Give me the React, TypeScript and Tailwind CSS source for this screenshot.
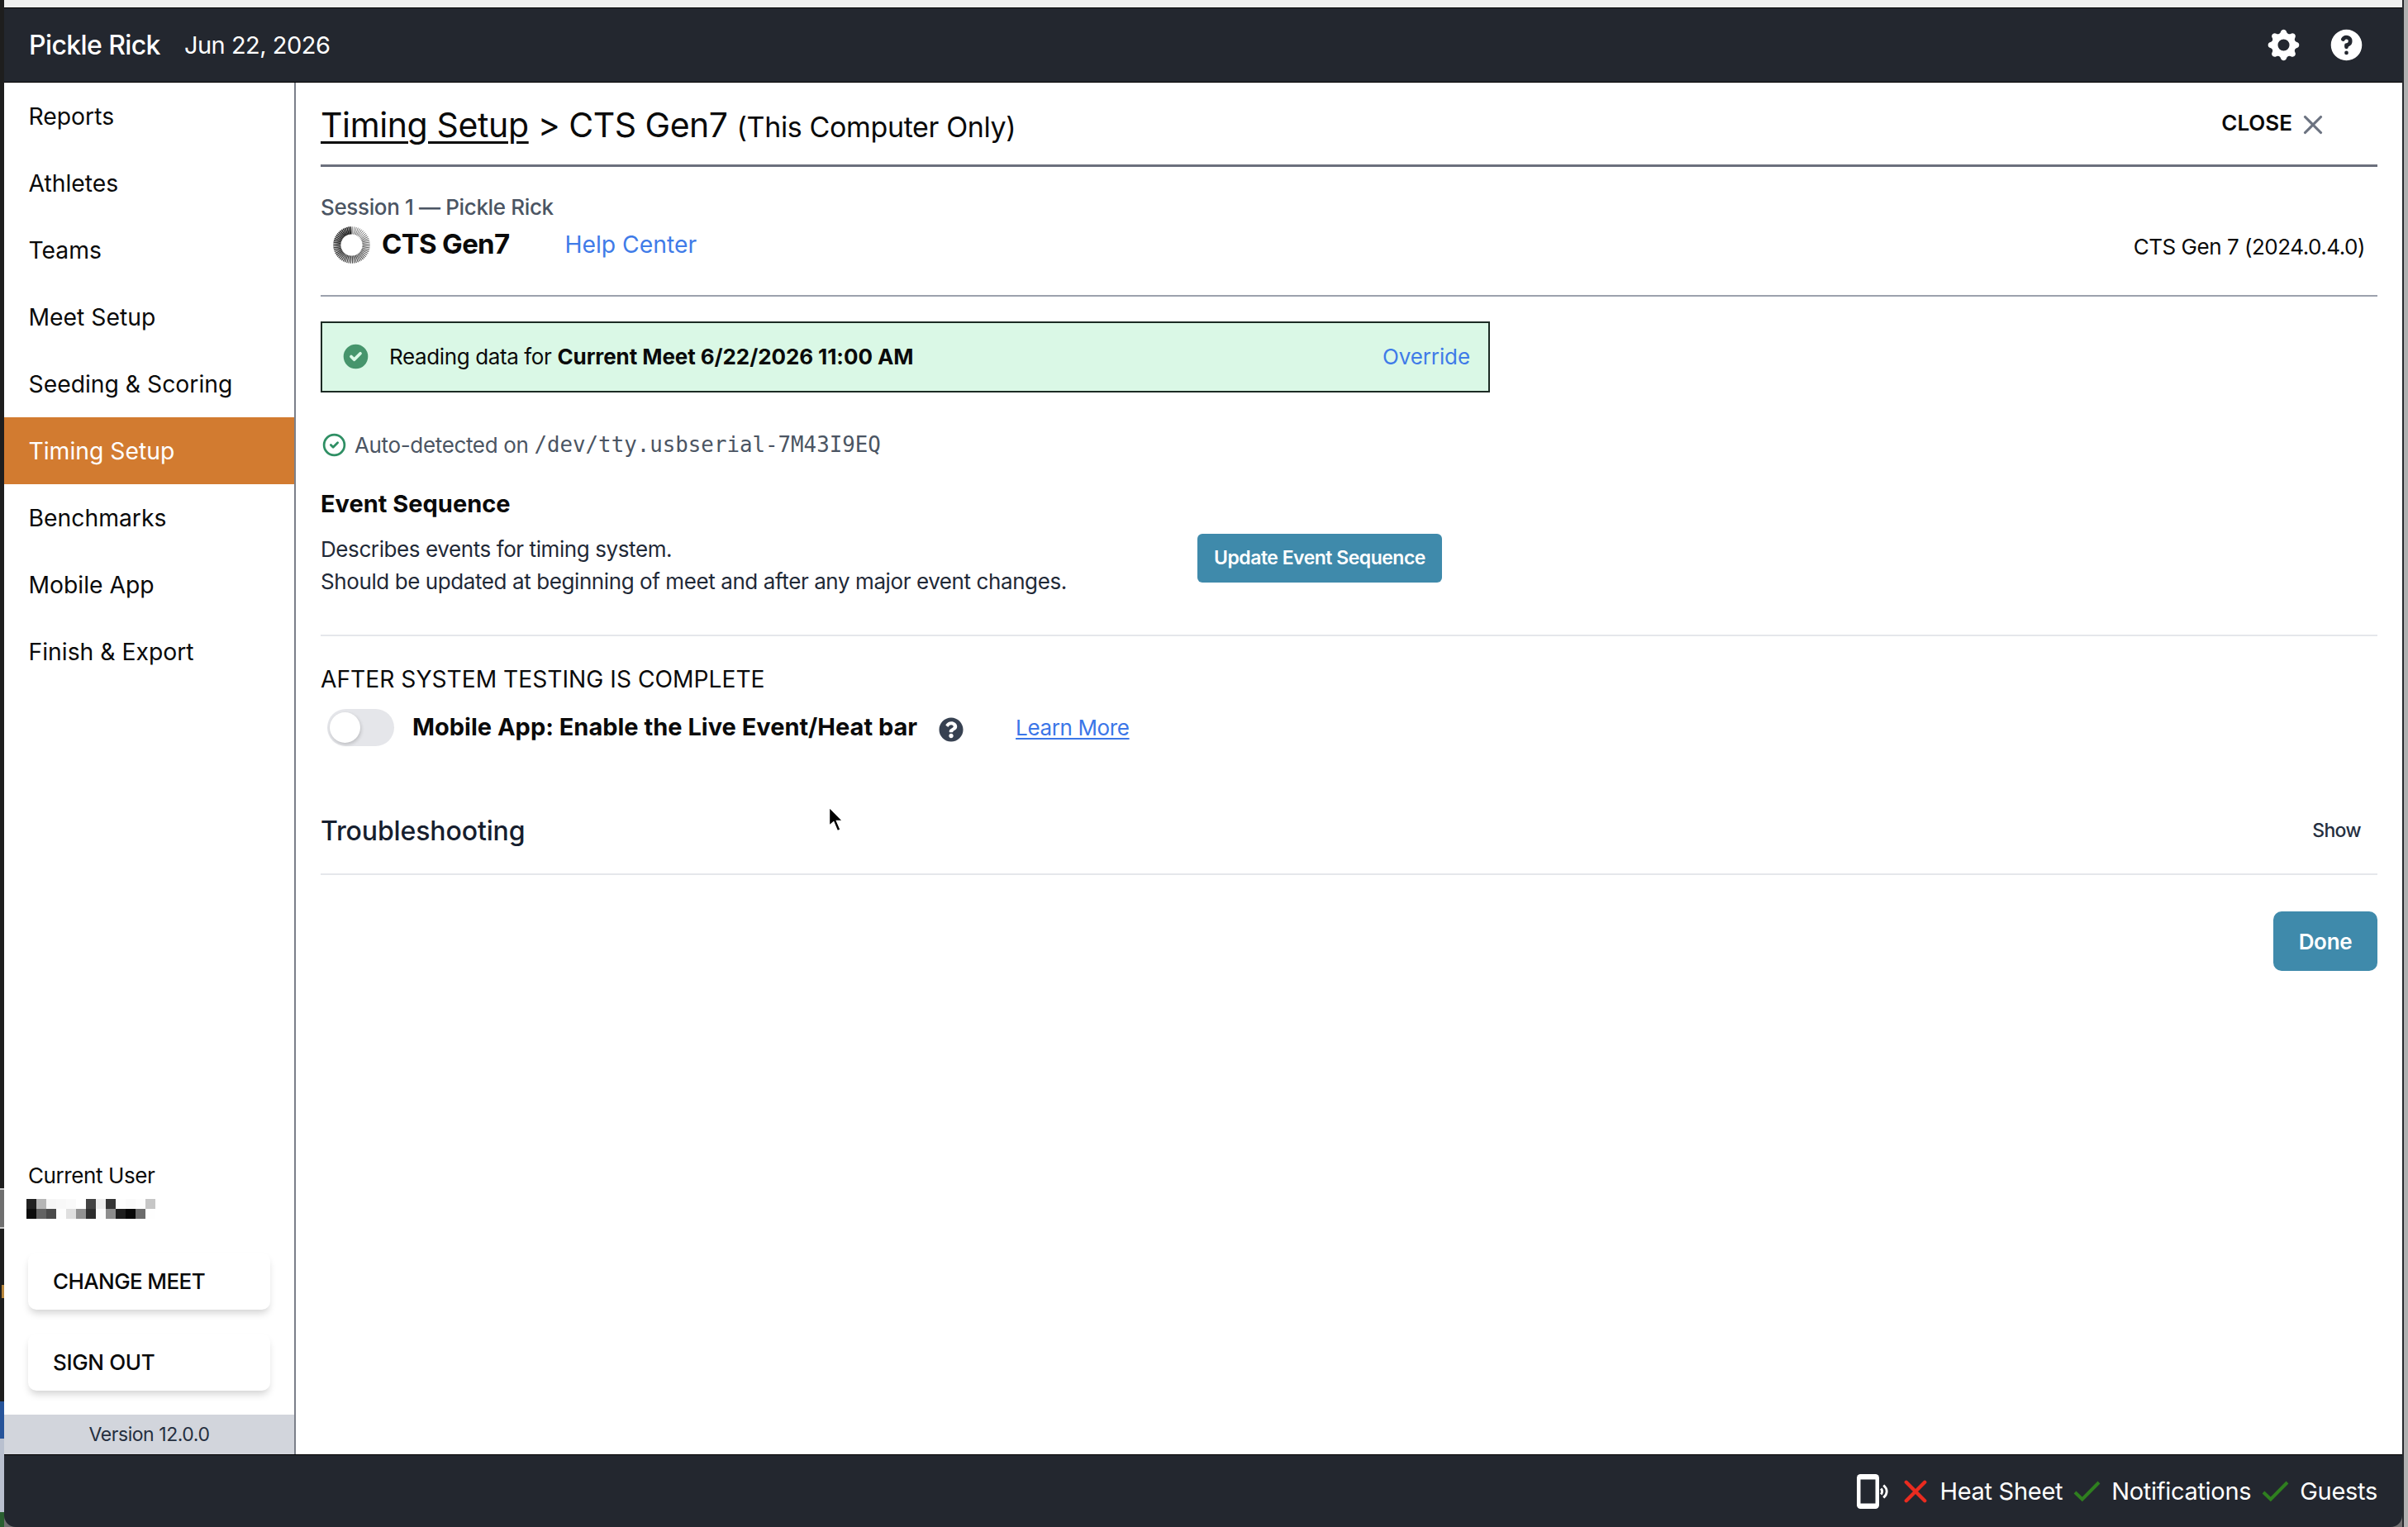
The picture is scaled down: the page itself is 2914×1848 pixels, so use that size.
import React from 'react';
import { HiCog, HiQuestionMarkCircle, HiOutlineX, HiCheckCircle, HiOutlineCheckCircle } from 'react-icons/hi';
import { FaQuestionCircle } from 'react-icons/fa';

const navItems = [
  'Reports',
  'Athletes',
  'Teams',
  'Meet Setup',
  'Seeding & Scoring',
  'Timing Setup',
  'Benchmarks',
  'Mobile App',
  'Finish & Export',
];

// Redacted user name, one grey level per block
const redacted = [
  ['#212121', '#b5b5b5', '#f6f6f6', '#f8f8f8', '#fafafa', '#ffffff', '#434343', '#eeeeee', '#353535', '#fdfdfd', '#fafafa', '#fdfdfd', '#c6c6c6'],
  ['#0c0c0c', '#636363', '#4a4a4a', '#fdfdfd', '#dfdfdf', '#919191', '#2d2d2d', '#fdfdfd', '#8d8d8d', '#1e1e1e', '#070707', '#6b6b6b', '#fefefe'],
];

const SpokeRing: React.FC = () => {
  const spokes = Array.from({ length: 60 }, (_, i) => i);
  return (
    <svg viewBox="0 0 44 44" className="h-[45px] w-[45px]">
      {spokes.map((i) => (
        <line
          key={i}
          x1="22"
          y1="0.2"
          x2="22"
          y2="9.2"
          stroke="#111"
          strokeWidth={0.7 + (i / 60) * 0.85}
          strokeOpacity={0.65 + (i / 60) * 0.3}
          transform={`rotate(${i * 6 + 3} 22 22)`}
        />
      ))}
    </svg>
  );
};

const PhoneSignal: React.FC = () => (
  <svg viewBox="0 0 40 42" className="h-[42px] w-10" fill="none">
    <rect width="27" height="42" rx="4.5" fill="#fff" />
    <rect x="4.5" y="6.5" width="18" height="29" fill="#23272f" />
    <path d="M29.3 17.5c1.5 2 1.5 5 0 7" stroke="#fff" strokeWidth="3" />
    <path d="M32.3 13.5c5.2 4.5 5.2 10.5 0 15" stroke="#fff" strokeWidth="2.8" />
  </svg>
);

const Check: React.FC = () => (
  <svg viewBox="0 0 33 26" className="h-[26px] w-[33px]" fill="none">
    <path d="M2 14 10.8 22.5 31 2" stroke="#2f7f1f" strokeWidth="4" />
  </svg>
);

const Cross: React.FC = () => (
  <svg viewBox="0 0 28 28" className="h-7 w-7" fill="none">
    <path d="M2.8 2.8 25.2 25.2M25.2 2.8 2.8 25.2" stroke="#ea2b1f" strokeWidth="4.4" strokeLinecap="round" />
  </svg>
);

const Sidebar: React.FC = () => (
  <aside className="flex w-[353px] shrink-0 flex-col border-r-2 border-[#7b7f89]">
    <nav className="flex flex-col">
      {navItems.map((item) => (
        <a
          key={item}
          className={
            item === 'Timing Setup'
              ? 'flex h-[81px] items-center bg-[#d27b30] pl-[29.5px] pt-0.5 text-[28.3px] text-white'
              : 'flex h-[81px] items-center pl-[29.5px] pt-0.5 text-[28.3px]'
          }
        >
          {item}
        </a>
      ))}
    </nav>
    <div className="mt-auto flex flex-col px-[29px]">
      <span className="text-[26px] leading-[38px] tracking-[-0.4px]">Current User</span>
      <div className="-ml-0.5 mt-[9px] flex flex-col">
        {redacted.map((row, r) => (
          <div key={r} className="flex">
            {row.map((color, c) => (
              <span key={c} className="h-3 w-3" style={{ backgroundColor: color }} />
            ))}
          </div>
        ))}
      </div>
      <button className="mt-[41px] h-[69px] rounded-[10px] bg-white pl-[30px] text-left text-[26px] font-medium tracking-[-0.6px] shadow-[0_6px_10px_-2px_rgba(0,0,0,0.18)]">
        CHANGE MEET
      </button>
      <button className="mt-[29px] h-[69px] rounded-[10px] bg-white pl-[30px] text-left text-[26px] font-medium tracking-[-0.35px] shadow-[0_6px_10px_-2px_rgba(0,0,0,0.18)]">
        SIGN OUT
      </button>
    </div>
    <div className="mt-[29px] flex h-12 items-center justify-center bg-[#d2d5dc] text-[23px] tracking-[-0.45px] text-[#252f3f]">
      Version 12.0.0
    </div>
  </aside>
);

const Main: React.FC = () => (
  <main className="flex grow flex-col pl-[30px] pr-[30px]">
    <div className="flex h-[102px] items-center justify-between border-b-[3px] border-[#6b6f7c] pt-[5px]">
      <h1 className="text-[41px] tracking-[-0.37px]">
        <span className="underline decoration-[3px] underline-offset-[5px]">Timing Setup</span>
        <span className="tracking-[-0.5px]"> &gt; CTS Gen7 </span>
        <span className="text-[34px]">(This Computer Only)</span>
      </h1>
      <button className="mr-[59px] flex items-center gap-[6px] pb-[7px] text-[26px] font-semibold">
        CLOSE
        <HiOutlineX className="mt-1 h-[38px] w-[38px] text-[#6b7280]" />
      </button>
    </div>

    <div className="flex h-[157px] flex-col border-b-2 border-[#9ca1ad] pt-[30px]">
      <span className="text-[26px] font-medium leading-[38px] tracking-[-0.36px] text-[#4b5563]">
        Session 1 — Pickle Rick
      </span>
      <div className="flex h-[52px] items-center">
        <span className="ml-[15px]">
          <SpokeRing />
        </span>
        <span className="ml-[14px] text-[33px] font-bold tracking-[-0.7px]">CTS Gen7</span>
        <a className="ml-[67px] text-[28.3px] text-[#3f7be8]">Help Center</a>
        <span className="ml-auto mr-[15px] mt-1 text-[26px] tracking-[-0.48px]">CTS Gen 7 (2024.0.4.0)</span>
      </div>
    </div>

    <div className="mt-[30px] flex h-[86px] w-[1415px] items-center border-2 border-[#1c2b24] bg-[#daf8e6] pb-px pl-[22px] pr-[22px] text-[26px]">
      <HiCheckCircle className="h-[37px] w-[37px] text-[#46956c]" />
      <span className="ml-[22px] tracking-[-0.38px]">
        Reading data for{' '}
        <span className="font-bold tracking-[-0.08px]">Current Meet 6/22/2026 11:00 AM</span>
      </span>
      <a className="ml-auto tracking-[-0.1px] text-[#3f7be8]">Override</a>
    </div>

    <div className="mt-[43px] flex h-10 items-center text-[26px] text-[#4b5563]">
      <HiOutlineCheckCircle className="h-[33px] w-[33px] text-[#2f8f64]" />
      <span className="ml-2 tracking-[-0.35px]">Auto-detected on</span>
      <span className="ml-[7px] font-['DejaVu_Sans_Mono',monospace] text-[25.8px]">/dev/tty.usbserial-7M43I9EQ</span>
    </div>

    <div className="mt-[27px] flex h-[185px] items-start border-b-2 border-[#e5e7eb]">
      <div className="flex w-[1061px] flex-col">
        <h2 className="text-[29px] font-bold leading-[50px]">Event Sequence</h2>
        <p className="mt-[10px] text-[26px] leading-[39px] tracking-[-0.41px] text-[#1f2937]">
          Describes events for timing system.
          <br />
          Should be updated at beginning of meet and after any major event changes.
        </p>
      </div>
      <button className="mt-[61px] flex h-[59px] w-[296px] items-center justify-center rounded-[6px] bg-[#3f8aab] text-[23px] font-semibold tracking-[-0.5px] text-white">
        Update Event Sequence
      </button>
    </div>

    <div className="mt-8 text-[28.2px] leading-10">AFTER SYSTEM TESTING IS COMPLETE</div>
    <div className="mt-[14px] flex h-[48px] items-center">
      <span className="ml-2 flex h-[45px] w-[81px] items-center rounded-full bg-[#e5e6ea] pl-[3px]">
        <span className="h-[37px] w-[37px] rounded-full bg-white shadow-[1px_2px_4px_rgba(0,0,0,0.18)]" />
      </span>
      <span className="ml-[22px] text-[29px] font-bold">Mobile App: Enable the Live Event/Heat bar</span>
      <FaQuestionCircle className="ml-[26px] mt-1.5 h-[30px] w-[30px] text-[#374151]" />
      <a className="ml-[63px] text-[26px] tracking-[-0.37px] text-[#3b76e8] underline decoration-2 underline-offset-[3px]">
        Learn More
      </a>
    </div>

    <div className="mt-[75px] flex h-[80px] items-start justify-between border-b-2 border-[#e5e7eb]">
      <h2 className="text-[32px] font-medium leading-[53px] tracking-[-0.12px] text-[#161e2e]">Troubleshooting</h2>
      <button className="mr-5 text-[23px] font-medium leading-[53px] tracking-[-0.6px] text-[#252f3f]">Show</button>
    </div>

    <button className="mt-11 flex h-[72px] w-[126px] items-center justify-center self-end rounded-[10px] bg-[#3f8aab] text-[26px] font-semibold tracking-[-0.3px] text-white">
      Done
    </button>
  </main>
);

const App: React.FC = () => (
  <div className="relative flex h-[1848px] w-[2914px] overflow-hidden bg-[#b0b0b0] font-['Inter',sans-serif] text-[#0a0a0a]">
    <div className="flex w-[5px] shrink-0 flex-col bg-[#1e1e1e]">
      <div className="mt-[1438px] h-[49px] border-y-2 border-[#c9c9c9] bg-[#6f6f6f]" />
      <div className="ml-0.5 mt-[68px] h-4 w-[3px] bg-[#b8863b]" />
      <div className="mt-[125px] h-[45px] bg-[#27549a]" />
      <div className="h-[89px] bg-[#b9c0cf]" />
      <div className="grow bg-[#2a5f30]" />
    </div>

    <div className="flex w-[2902px] shrink-0 flex-col bg-[#6f6f6f]">
      <div className="h-[9px] shrink-0 bg-[#efefef]" />
      <header className="flex h-[91px] shrink-0 items-center border-y border-black bg-[#23272f] pl-[30px] pr-[44px] text-white">
        <span className="text-[32px] font-medium tracking-[-0.6px]">Pickle Rick</span>
        <span className="ml-[29px] text-[29px] tracking-[-0.5px]">Jun 22, 2026</span>
        <HiCog className="ml-auto h-[47px] w-[47px]" />
        <HiQuestionMarkCircle className="ml-[29px] h-[47px] w-[47px]" />
      </header>

      <div className="flex h-[1660px] shrink-0 bg-white">
        <Sidebar />
        <Main />
      </div>

      <footer className="flex grow items-center justify-end rounded-b-[14px] border-t border-black bg-[#23272f] pr-[30px] text-[29px] tracking-[-0.3px] text-white">
        <PhoneSignal />
        <span className="ml-[17px]">
          <Cross />
        </span>
        <span className="ml-[15px]">Heat Sheet</span>
        <span className="ml-[13px]">
          <Check />
        </span>
        <span className="ml-[13px]">Notifications</span>
        <span className="ml-[13px]">
          <Check />
        </span>
        <span className="ml-[13px]">Guests</span>
      </footer>
    </div>
    <div className="w-0.5 shrink-0 bg-[#26282c]" />

    {/* mouse pointer */}
    <svg viewBox="0 0 24 38" className="absolute left-[1000px] top-[973px] h-[38px] w-6">
      <path d="M3 3v24.5l5.6-5 4.5 10.8 4.6-2-4.5-10.3h7.8z" fill="#000" stroke="#fff" strokeWidth="2.4" />
    </svg>
  </div>
);

export default App;
